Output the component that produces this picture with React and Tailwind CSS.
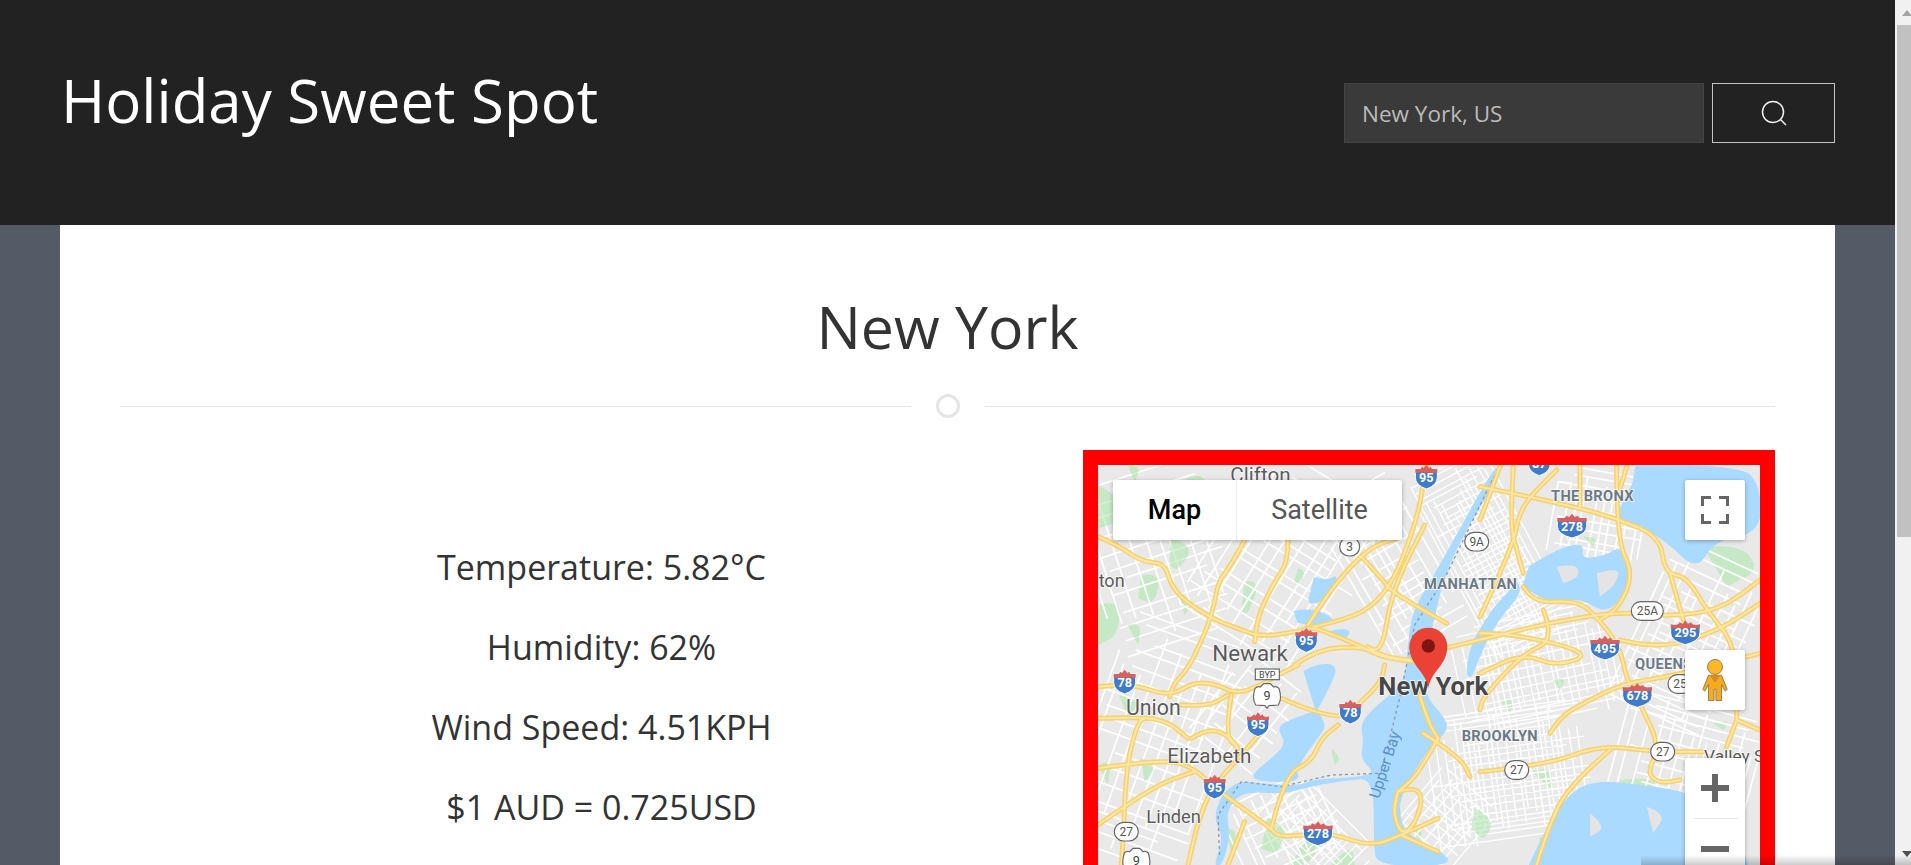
import { useMemo } from 'react';

// map is drawn in 3x px (662x400 on screen)
const R = 1146; // x offset of the right half of the map
const r = (pts) => pts.map(([x, y]) => [x + R, y - 75]);
const low = (pts) => pts.map(([x, y]) => [x, y + 600]);

const smooth = (pts) => {
  let d = `M${pts[0][0]} ${pts[0][1]}`;
  for (let i = 1; i < pts.length - 1; i++) {
    const mx = (pts[i][0] + pts[i + 1][0]) / 2;
    const my = (pts[i][1] + pts[i + 1][1]) / 2;
    d += ` Q${pts[i][0]} ${pts[i][1]} ${mx} ${my}`;
  }
  const last = pts[pts.length - 1];
  return d + ` L${last[0]} ${last[1]}`;
};
const line = (pts) => 'M' + pts.map((p) => p.join(' ')).join(' L');

const highways = [
  [[0, 215], [60, 240], [130, 290], [200, 295], [215, 350], [250, 400], [340, 460], [430, 495], [490, 515], [600, 500], [640, 485], [720, 515], [790, 545], [860, 580], [1000, 595]],
  [[440, 225], [400, 300], [360, 350], [345, 440], [310, 530], [270, 610], [225, 660], [215, 695]],
  [[570, 225], [570, 290], [530, 350], [480, 450], [470, 530]],
  [[630, 480], [680, 400], [760, 300], [830, 240], [900, 220]],
  [[650, 485], [760, 460], [840, 410], [900, 320], [960, 150], [975, 60], [985, 0]],
  [[790, 275], [860, 350], [880, 380], [1046, 475]],
  [[590, 600], [660, 550], [800, 545], [870, 580], [1000, 590]],
  [[810, 545], [850, 580], [880, 380], [980, 180]],
  ...[
    [[0, 65], [100, 55], [215, 95], [290, 50], [360, 60], [410, 85], [470, 70], [540, 30], [600, 0]],
    [[550, 100], [720, 175], [790, 110], [850, 50], [860, 0]],
    [[500, 190], [430, 270], [340, 370], [300, 470], [270, 600]],
    [[400, 90], [380, 210], [420, 250]],
    [[0, 160], [130, 155], [210, 170], [270, 220]],
    [[250, 120], [330, 125], [390, 90]],
    [[0, 310], [200, 280], [290, 310], [350, 370], [520, 490], [540, 515], [620, 510], [700, 505], [820, 545], [910, 510], [1020, 460]],
    [[70, 600], [75, 540], [85, 300], [120, 170], [140, 160]],
    [[0, 480], [100, 410], [200, 350], [290, 320]],
    [[390, 600], [440, 470]],
    [[520, 490], [560, 330], [640, 290], [670, 220], [720, 180]],
    [[900, 380], [950, 365], [975, 400], [950, 480], [910, 510], [885, 440], [900, 380]],
    [[965, 90], [990, 170], [1020, 220]],
    [[910, 510], [1020, 560]],
    [[280, 220], [330, 190], [390, 210], [420, 250]],
    [[1020, 220], [960, 330], [900, 380]],
  ].map(low),
  ...[
    [[0, 140], [100, 160], [280, 200], [410, 235], [540, 290], [555, 400], [620, 410], [680, 510], [770, 620], [770, 840]],
    [[410, 80], [410, 300], [460, 400], [420, 500], [360, 540]],
    [[-170, 640], [0, 600], [220, 545], [420, 515], [570, 530], [720, 510], [840, 420]],
    [[0, 580], [100, 580], [340, 640], [230, 680], [130, 640], [0, 700]],
    [[130, 440], [160, 490], [290, 480], [350, 530], [420, 620], [440, 720], [480, 790], [540, 920], [500, 1000], [540, 1030], [600, 1020]],
    [[190, 510], [225, 600], [130, 640], [10, 770], [0, 810]],
    [[420, 600], [540, 630], [720, 570], [840, 490]],
    [[210, 880], [240, 830], [310, 790], [430, 730], [570, 710], [840, 640]],
    [[0, 995], [200, 975], [360, 915], [520, 935], [670, 935]],
    [[170, 1275], [220, 1110], [300, 1010], [390, 930]],
    [[770, 840], [840, 870]],
    [[770, 840], [740, 920]],
    [[570, 400], [610, 540]],
    [[100, 80], [90, 250], [110, 330], [130, 400]],
    [[300, 75], [300, 200]],
    [[440, 80], [410, 180]],
    [[0, 530], [100, 320], [120, 200], [230, 90]],
    [[0, 240], [60, 80]],
    [[-170, 880], [-60, 950], [-30, 1010]],
  ].map(r),
];

const water = [
  // hudson + upper bay
  [[1215, 0], [1200, 0], [1150, 80], [1090, 190], [1000, 350], [945, 440], [930, 560], [925, 640], [880, 690], [830, 730], [790, 775], [800, 830], [790, 880], [835, 925], [780, 940], [650, 945], [600, 965], [500, 960], [430, 950], [390, 975], [370, 1000], [350, 1060], [380, 1120], [350, 1200], [370, 1200], [395, 1110], [380, 1040], [430, 975], [560, 985], [640, 960], [740, 945], [830, 935], [830, 1140], [840, 1200], [1060, 1200], [1030, 1160], [920, 1110], [900, 1040], [910, 980], [970, 880], [1010, 830], [1050, 790], [1030, 750], [985, 700], [975, 640], [1000, 480], [1040, 320], [1105, 190], [1165, 90]],
  // newark bay
  [[620, 620], [650, 600], [720, 600], [690, 670], [655, 735], [640, 745], [570, 770], [540, 790], [570, 840], [500, 900], [450, 945], [605, 950], [590, 910], [670, 800], [680, 780], [655, 735]],
  // passaic
  [[650, 340], [690, 350], [720, 330], [690, 400], [630, 420], [640, 380]],
  [[590, 440], [640, 430], [720, 470], [640, 480], [600, 470]],
  [[700, 500], [760, 490], [740, 520]],
  // east river + sound
  ...[
    [[470, 75], [780, 75], [840, 140], [840, 275], [700, 300], [650, 390], [560, 300], [450, 240], [400, 250], [460, 130]],
    [[150, 380], [230, 330], [310, 310], [300, 360], [380, 350], [420, 320], [460, 390], [440, 450], [380, 520], [300, 470], [220, 490], [130, 440]],
    [[110, 430], [130, 450], [50, 540], [0, 640], [-30, 720], [-40, 690], [-20, 600], [40, 510]],
    [[150, 1275], [220, 1120], [320, 1020], [500, 1040], [640, 1060], [780, 1200], [800, 1275]],
  ].map(r),
];

const parks = [
  [[0, 60], [60, 90], [70, 170], [0, 190]], [[130, 330], [190, 320], [170, 420], [120, 400]], [[220, 220], [290, 240], [240, 320], [215, 300]],
  [[440, 350], [490, 340], [450, 450], [430, 440]], [[600, 310], [625, 315], [605, 360], [590, 350]], [[0, 420], [70, 400], [60, 510], [0, 540]],
  [[230, 60], [300, 20], [330, 60], [260, 120]], [[60, 680], [130, 700], [90, 760]], [[510, 1060], [570, 1080], [540, 1170], [490, 1150]],
  [[620, 1120], [660, 1130], [640, 1200], [580, 1200]], [[700, 850], [730, 880], [710, 900]], [[950, 1090], [980, 1100], [960, 1130]],
  [[1130, 1030], [1190, 1060], [1160, 1130], [1120, 1090]], [[1300, 920], [1360, 900], [1360, 970]], [[90, 0], [130, 0], [110, 50]],
  [[0, 900], [40, 880], [30, 960]], [[130, 880], [180, 900], [140, 950]], [[380, 1090], [420, 1090], [400, 1160]], [[300, 110], [350, 90], [340, 180]],
  [[240, 380], [290, 410], [260, 450]], [[90, 480], [130, 470], [120, 540]], [[700, 1200], [760, 1130], [770, 1200]],
  ...[
    [[500, 90], [560, 80], [590, 170], [530, 120]], [[670, 320], [780, 310], [840, 390], [740, 440]], [[310, 290], [350, 290], [340, 320]],
    [[420, 1020], [500, 1010], [540, 1040], [420, 1050]], [[180, 1190], [260, 1200], [240, 1275], [170, 1275]], [[700, 850], [750, 840], [730, 870]],
    [[220, 720], [260, 710], [240, 750]], [[60, 780], [110, 770], [90, 820]],
  ].map(r),
];

const islands = [
  [[230, 380], [290, 370], [300, 410], [250, 430]], [[350, 400], [420, 380], [410, 430], [360, 470]],
  [[330, 1120], [380, 1160], [330, 1190]], [[500, 1100], [560, 1120], [520, 1180]], [[620, 1200], [760, 1275], [620, 1275]],
].map(r);

const patches = [
  [170, 250, 400, 580, -18, 44], [560, 300, 440, 580, 32, 42], [170, 850, 400, 740, 20, 42], [560, 1090, 320, 260, -25, 32], [450, 760, 240, 320, 38, 44],
  [880, 300, 260, 500, -30, 34], [1180, 270, 260, 600, -28, 18], [1500, 180, 280, 320, 10, 30], [1320, 620, 480, 340, -12, 24], [1780, 520, 320, 520, 25, 30],
  [1240, 930, 480, 400, -8, 21], [1760, 940, 440, 440, 15, 32], [660, 1120, 360, 200, 45, 26], [1030, 1080, 220, 280, 40, 24],
];

function MinorRoads() {
  const lines = useMemo(() => {
    let s = 7;
    const rnd = () => ((s = (s * 16807) % 2147483647) / 2147483647);
    const out = [];
    patches.forEach(([cx, cy, w, h, a, gap], i) => {
      const segs = [];
      for (let x = -w / 2; x < w / 2; x += gap * (0.6 + rnd() * 0.8)) {
        const y1 = -h / 2 + rnd() * h * 0.25;
        const y2 = h / 2 - rnd() * h * 0.25;
        segs.push(`M${x.toFixed(0)} ${y1.toFixed(0)}V${y2.toFixed(0)}`);
      }
      for (let y = -h / 2; y < h / 2; y += gap * (0.6 + rnd() * 0.8)) {
        const x1 = -w / 2 + rnd() * w * 0.25;
        const x2 = w / 2 - rnd() * w * 0.25;
        segs.push(`M${x1.toFixed(0)} ${y.toFixed(0)}H${x2.toFixed(0)}`);
      }
      out.push(
        <path key={i} d={segs.join('')} transform={`translate(${cx} ${cy}) rotate(${a})`} stroke="#fff" strokeWidth={gap < 30 ? 4 : 5} fill="none" />
      );
    });
    return out;
  }, []);
  return <g>{lines}</g>;
}

function Interstate({ x, y, n }) {
  const w = n.length > 2 ? 44 : 33;
  return (
    <g transform={`translate(${x} ${y})`}>
      <path d={`M${-w} -24 L${w} -24 L${w} 2 Q${w} 26 0 37 Q${-w} 26 ${-w} 2 Z`} fill="#3f7bc9" stroke="#fff" strokeWidth="3" />
      <path d={`M${-w} -24 Q${-w / 2} -18 ${-w / 2.5} -30 L-8 -26 L0 -36 L8 -26 L${w / 2.5} -30 Q${w / 2} -18 ${w} -24 L${w} -12 L${-w} -12 Z`} fill="#d9605c" />
      <text x="0" y="15" textAnchor="middle" fontFamily="Roboto, sans-serif" fontWeight="700" fontSize="38" fill="#fff">{n}</text>
    </g>
  );
}

function RouteBadge({ x, y, n }) {
  const w = n.length > 2 ? 48 : n.length > 1 ? 36 : 30;
  return (
    <g>
      <rect x={x - w} y={y - 28} width={w * 2} height="56" rx="28" fill="#fff" stroke="#666" strokeWidth="3.5" />
      <text x={x} y={y + 13} textAnchor="middle" fontFamily="Roboto, sans-serif" fontSize="36" fill="#555">{n}</text>
    </g>
  );
}

function UsShield({ x, y, n }) {
  return (
    <g transform={`translate(${x} ${y})`}>
      <path d="M-36 -22 Q-28 -30 -20 -26 L-10 -36 L10 -36 L20 -26 Q28 -30 36 -22 Q46 10 34 28 L6 30 L0 38 L-6 30 L-34 28 Q-46 10 -36 -22 Z" fill="#fff" stroke="#666" strokeWidth="3.5" />
      <text x="0" y="14" textAnchor="middle" fontFamily="Roboto, sans-serif" fontSize="38" fill="#444">{n}</text>
    </g>
  );
}

function Label({ x, y, size, bold, fill = '#5a5a5a', spacing, children }) {
  return (
    <text x={x} y={y} fontFamily="Roboto, sans-serif" fontSize={size} fontWeight={bold ? 700 : 400} fill={fill} letterSpacing={spacing} stroke="#fff" strokeWidth="4" paintOrder="stroke">
      {children}
    </text>
  );
}

function MapDrawing() {
  return (
    <svg viewBox="0 0 1986 1200" className="block h-[400px] w-[662px]">
      <rect width="1986" height="1200" fill="#e9e9e9" />
      {parks.map((p, i) => <path key={i} d={smooth(p) + 'Z'} fill="#c5e8c5" />)}
      <MinorRoads />
      {parks.filter((_, i) => i % 2 === 0).map((p, i) => <path key={i} d={smooth(p) + 'Z'} fill="#c5e8c5" opacity="0.7" />)}
      {water.map((p, i) => <path key={i} d={smooth(p) + 'Z'} fill="#aadaff" stroke="#aadaff" strokeWidth="6" strokeLinejoin="round" />)}
      {islands.map((p, i) => <path key={i} d={smooth(p) + 'Z'} fill="#e4e4e4" />)}
      <path d={line([[1190, 30], [1040, 340], [950, 480], [905, 700], [850, 920]])} stroke="#8d9aa5" strokeWidth="4" strokeDasharray="9 9" fill="none" />
      <path d={line([[840, 925], [700, 930], [550, 965], [430, 950], [360, 1050], [365, 1180]])} stroke="#8d9aa5" strokeWidth="4" strokeDasharray="9 9" fill="none" />
      {highways.map((p, i) => <path key={i} d={smooth(p)} stroke="#f8d06c" strokeWidth="15" fill="none" strokeLinecap="round" />)}
      {highways.map((p, i) => <path key={i} d={smooth(p)} stroke="#fde7a6" strokeWidth="6" fill="none" strokeLinecap="round" />)}

      <Label x="397" y="50" size="62">Clifton</Label>
      <Label x="2" y="365" size="54">ton</Label>
      <Label x="343" y="587" size="67">Newark</Label>
      <Label x="84" y="750" size="64">Union</Label>
      <Label x="208" y="893" size="62">Elizabeth</Label>
      <Label x="145" y="1073" size="55">Linden</Label>
      <Label x="841" y="690" size="77" bold fill="#474747">New York</Label>
      <Label x="978" y="373" size="44" bold fill="#6b7886" spacing="1">MANHATTAN</Label>
      <Label x="1091" y="828" size="44" bold fill="#6b7886" spacing="1">BROOKLYN</Label>
      <Label x="1359" y="107" size="44" bold fill="#6b7886" spacing="1">THE BRONX</Label>
      <Label x="1611" y="612" size="44" bold fill="#6b7886" spacing="1">QUEENS</Label>
      <Label x="1818" y="890" size="52">Valley S</Label>
      <text transform="rotate(-72 843 1003)" x="843" y="1003" fontFamily="Roboto, sans-serif" fontSize="46" fill="#5b8fc9">Upper Bay</text>

      <Interstate x={625} y={525} n="95" />
      <Interstate x={985} y={35} n="95" />
      <Interstate x={80} y={650} n="78" />
      <Interstate x={480} y={778} n="95" />
      <Interstate x={350} y={965} n="95" />
      <Interstate x={660} y={1105} n="278" />
      <Interstate x={757} y={740} n="78" />
      <Interstate x={1422} y={182} n="278" />
      <Interstate x={1521} y={548} n="495" />
      <Interstate x={1762} y={502} n="295" />
      <Interstate x={1618} y={690} n="678" />
      <Interstate x={1324} y={-5} n="87" />
      <RouteBadge x={755} y={245} n="3" />
      <RouteBadge x={1136} y={230} n="9A" />
      <RouteBadge x={85} y={1100} n="27" />
      <RouteBadge x={1648} y={438} n="25A" />
      <RouteBadge x={1746} y={657} n="25" />
      <RouteBadge x={1694} y={860} n="27" />
      <RouteBadge x={1256} y={915} n="27" />
      <g>
        <rect x="472" y="612" width="72" height="32" fill="#fff" stroke="#666" strokeWidth="3.5" />
        <text x="508" y="638" textAnchor="middle" fontFamily="Roboto, sans-serif" fontSize="27" fill="#444">BYP</text>
      </g>
      <UsShield x={507} y={692} n="9" />
      <UsShield x={115} y={1186} n="9" />

      {/* pin */}
      <path d="M991 670 C985 620 934 600 934 545 a57 57 0 0 1 114 0 C1048 600 997 620 991 670 Z" fill="#ea4335" />
      <circle cx="991" cy="543" r="20" fill="#7d1510" />
    </svg>
  );
}

function Pegman() {
  return (
    <svg viewBox="0 0 30 46" className="h-[44px] w-[28px]">
      <circle cx="15" cy="9" r="8" fill="#fdb827" stroke="#8a7a55" />
      <path d="M8 18 L22 18 L28 33 L26 35 L22 28 L22 45 L16 45 L16 33 L14 33 L14 45 L8 45 L8 28 L4 35 L2 33 Z" fill="#f6ab1f" stroke="#8a7a55" />
      <path d="M9 18 L21 18 L15 26 Z" fill="#d98a2b" />
    </svg>
  );
}

export default function App() {
  return (
    <div className="relative flex h-[865px] w-full overflow-hidden font-['Open_Sans',sans-serif]">
      <div className="min-w-0 flex-1 bg-[#555b66]">
        <header className="flex h-[225px] items-start justify-between bg-[#222222] pl-[61px] pr-[60px]">
          <h1 className="mt-[58px] text-[60px] leading-[84px] font-normal text-white">Holiday Sweet Spot</h1>
          <form className="mt-[83px] flex gap-2">
            <input
              readOnly
              value="New York, US"
              className="h-[60px] w-[360px] border border-[#444444] bg-[#3a3a3a] px-[17px] text-[22.5px] text-[#bbbbbb] outline-none"
            />
            <button type="button" className="flex h-[60px] w-[123px] items-center justify-center border border-[#c4c4c4]">
              <svg viewBox="0 0 26 26" className="h-[26px] w-[26px]" fill="none" stroke="#f0f0f0" strokeWidth="1.5">
                <circle cx="12" cy="12" r="10.5" />
                <path d="M19.5 19.5 L25 25" />
              </svg>
            </button>
          </form>
        </header>

        <main className="ml-[60px] h-[640px] w-[1775px] bg-white px-[60px]">
          <h2 className="pt-[60px] text-center text-[59px] leading-[82px] font-normal text-[#333333]">New York</h2>
          <div className="mt-[27px] flex items-center">
            <div className="h-px flex-1 bg-[#e5e5e5]" />
            <div className="mx-[25px] h-6 w-6 rounded-full border-[3px] border-[#e5e5e5]" />
            <div className="h-px flex-1 bg-[#e5e5e5]" />
          </div>
          <div className="mt-[32px] flex items-start">
            <div className="flex-1 pt-[93px] text-center text-[34px] leading-[48px] font-normal text-[#333333]">
              <p className="mb-8">Temperature: 5.82°C</p>
              <p className="mb-8">Humidity: 62%</p>
              <p className="mb-8">Wind Speed: 4.51KPH</p>
              <p>$1 AUD = 0.725USD</p>
            </div>
            <div className="relative w-[692px] border-[15px] border-[#ff0000]">
              <MapDrawing />
              <div className="absolute top-[15px] left-[15px] flex h-[60px] w-[289px] rounded-[2px] bg-white font-['Roboto',sans-serif] text-[27px] shadow-[0_1px_4px_rgba(0,0,0,0.3)]">
                <div className="flex w-[123px] items-center justify-center font-medium text-black">Map</div>
                <div className="flex flex-1 items-center justify-center border-l border-[#ebebeb] text-[#565656]">Satellite</div>
              </div>
              <div className="absolute top-[15px] right-[15px] flex h-[60px] w-[60px] items-center justify-center rounded-[2px] bg-white shadow-[0_1px_4px_rgba(0,0,0,0.3)]">
                <svg viewBox="0 0 28 28" className="h-7 w-7" fill="none" stroke="#666666" strokeWidth="3">
                  <path d="M1.5 10 V1.5 H10 M18 1.5 H26.5 V10 M26.5 18 V26.5 H18 M10 26.5 H1.5 V18" />
                </svg>
              </div>
              <div className="absolute top-[185px] right-[15px] flex h-[60px] w-[60px] items-center justify-center rounded-[2px] bg-white shadow-[0_1px_4px_rgba(0,0,0,0.3)]">
                <Pegman />
              </div>
              <div className="absolute top-[293px] right-[15px] flex w-[60px] flex-col items-center rounded-[2px] bg-white shadow-[0_1px_4px_rgba(0,0,0,0.3)]">
                <div className="flex h-[60px] w-full items-center justify-center">
                  <svg viewBox="0 0 28 28" className="h-7 w-7" fill="#666666"><path d="M11 0h6v11h11v6H17v11h-6V17H0v-6h11z" /></svg>
                </div>
                <div className="h-px w-[45px] bg-[#e6e6e6]" />
                <div className="flex h-[60px] w-full items-center justify-center">
                  <div className="h-[6px] w-7 bg-[#666666]" />
                </div>
              </div>
            </div>
          </div>
        </main>
      </div>

      {/* scrollbar */}
      <div className="relative w-[16px] bg-[#f1f1f1]">
        <div className="absolute top-[10px] left-[7px] h-0 w-0 border-x-[5px] border-b-[6px] border-x-transparent border-b-[#a3a3a3]" />
        <div className="mt-[25px] ml-[2px] h-[512px] bg-[#c1c1c1]" />
        <div className="absolute bottom-[8px] left-[7px] h-0 w-0 border-x-[5px] border-t-[6px] border-x-transparent border-t-[#505050]" />
      </div>

      {/* shadow along the window edge */}
      <div className="pointer-events-none absolute right-0 bottom-0 h-[10px] w-[270px] bg-gradient-to-b from-transparent to-black/20" />
    </div>
  );
}
